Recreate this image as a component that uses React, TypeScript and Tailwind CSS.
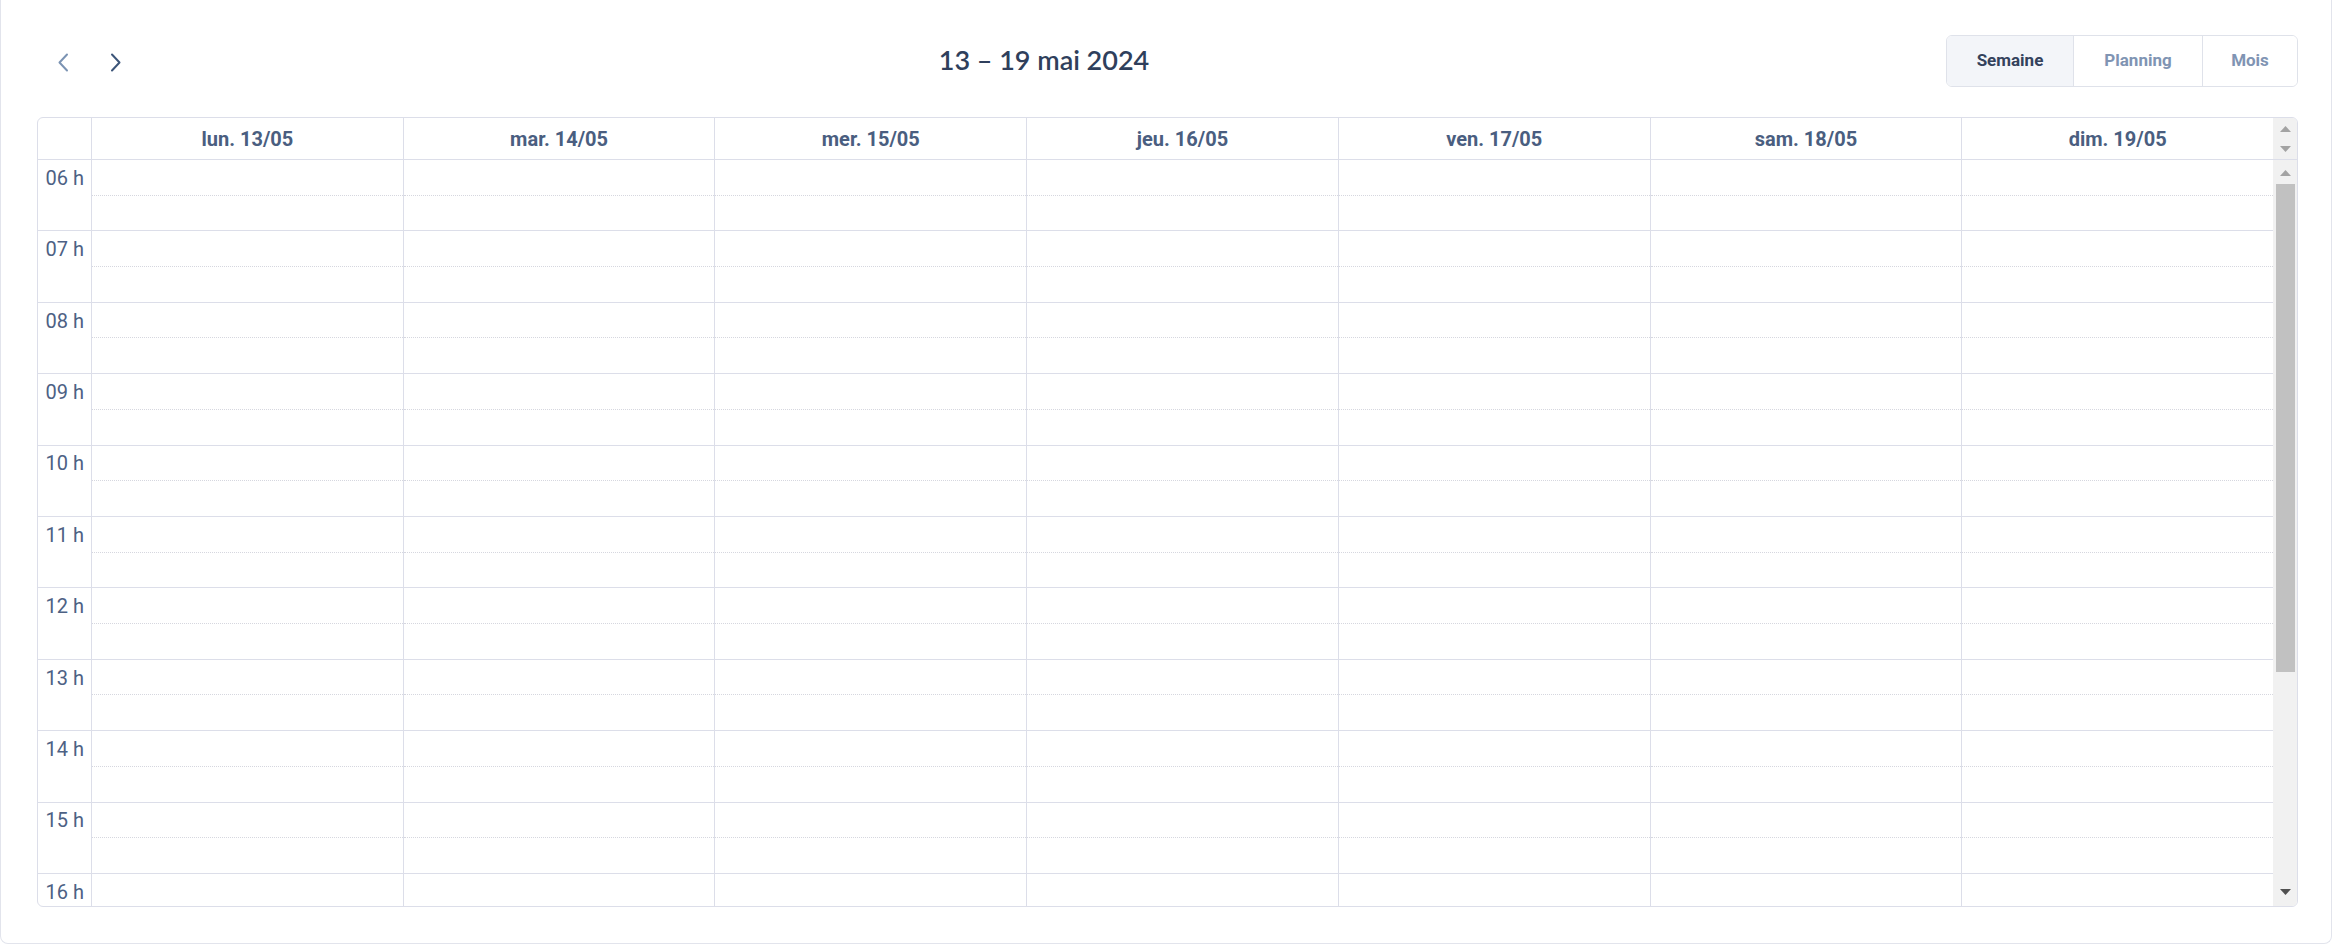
import React from 'react';

const days = ['lun. 13/05', 'mar. 14/05', 'mer. 15/05', 'jeu. 16/05', 'ven. 17/05', 'sam. 18/05', 'dim. 19/05'];
const hours = ['06', '07', '08', '09', '10', '11', '12', '13', '14', '15', '16'];

function Chevron({ dir, color }: { dir: 'left' | 'right'; color: string }) {
  return (
    <svg width="12" height="19" viewBox="0 0 12 19" fill="none">
      <path
        d={dir === 'left' ? 'M10 1.5 L2.5 9.5 L10 17.5' : 'M2 1.5 L9.5 9.5 L2 17.5'}
        stroke={color}
        strokeWidth="2"
        strokeLinecap="round"
        strokeLinejoin="round"
      />
    </svg>
  );
}

function Tri({ up, color }: { up?: boolean; color: string }) {
  return (
    <svg width="11" height="6" viewBox="0 0 11 6">
      <path d={up ? 'M0 6 L5.5 0 L11 6 Z' : 'M0 0 L11 0 L5.5 6 Z'} fill={color} />
    </svg>
  );
}

export default function App() {
  return (
    <div className="w-[2332px] h-[945px] bg-white font-['Roboto',sans-serif]">
      <div className="h-[944px] border border-t-0 border-[#e2e4ec] rounded-b-lg px-[36px] pr-[33px] flex flex-col">
        {/* toolbar */}
        <div className="h-[117px] flex items-center justify-between pt-[4px]">
          <div className="flex items-center gap-px pt-[4px]">
            <button className="w-[52px] h-[40px] flex items-center justify-center">
              <Chevron dir="left" color="#7b93b3" />
            </button>
            <button className="w-[52px] h-[40px] flex items-center justify-center">
              <Chevron dir="right" color="#3c5579" />
            </button>
          </div>
          <h1 className="font-['Lato',sans-serif] text-[27px] font-semibold text-[#2f3f5c]">
            13 – 19 mai 2024
          </h1>
          <div className="flex h-[52px] border border-[#dfe2ea] rounded-[6px] overflow-hidden text-[17px] font-bold">
            <button className="w-[127px] bg-[#f3f5f9] text-[#34425c] border-r border-[#dfe2ea]">Semaine</button>
            <button className="w-[129px] bg-white text-[#8094b3] border-r border-[#dfe2ea]">Planning</button>
            <button className="w-[94px] bg-white text-[#8094b3]">Mois</button>
          </div>
        </div>

        {/* calendar */}
        <div className="h-[790px] border border-[#dcdee9] rounded-[6px] overflow-hidden flex flex-col">
          {/* header */}
          <div className="flex h-[42px] border-b border-[#dcdee9] shrink-0">
            <div className="w-[54px] border-r border-[#dcdee9] shrink-0" />
            {days.map((d, i) => (
              <div
                key={d}
                className={`flex-1 flex items-center justify-center text-[20px] font-bold text-[#4a5e80] ${i < 6 ? 'border-r border-[#dcdee9]' : ''}`}
              >
                {d}
              </div>
            ))}
            <div className="w-[24px] bg-[#f1f1f1] flex flex-col items-center justify-center gap-[14px] shrink-0">
              <Tri up color="#a3a3a3" />
              <Tri color="#a3a3a3" />
            </div>
          </div>

          {/* body */}
          <div className="flex flex-1 min-h-0">
            <div className="flex-1 overflow-hidden flex">
              <div className="w-[54px] border-r border-[#dcdee9] shrink-0">
                {hours.map((h) => (
                  <div key={h} className="h-[71.4px] border-b border-[#dcdee9]">
                    <div className="h-[35.7px] flex items-center justify-end pr-[7px] text-[20px] text-[#4d6184]">
                      {h} h
                    </div>
                  </div>
                ))}
              </div>
              {days.map((d, i) => (
                <div key={d} className={`flex-1 ${i < 6 ? 'border-r border-[#dcdee9]' : ''}`}>
                  {hours.map((h) => (
                    <div key={h} className="h-[71.4px] border-b border-[#dcdee9]">
                      <div className="h-[35.7px] border-b border-dotted border-[#d6d7df]" />
                    </div>
                  ))}
                </div>
              ))}
            </div>
            <div className="w-[24px] bg-[#f1f1f1] flex flex-col items-center shrink-0">
              <div className="h-[24px] flex items-center justify-center pt-px">
                <Tri up color="#a3a3a3" />
              </div>
              <div className="w-[19px] h-[488px] bg-[#c1c1c1]" />
              <div className="flex-1" />
              <div className="h-[24px] flex items-center justify-center pb-[4px]">
                <Tri color="#505050" />
              </div>
            </div>
          </div>
        </div>
      </div>
    </div>
  );
}
